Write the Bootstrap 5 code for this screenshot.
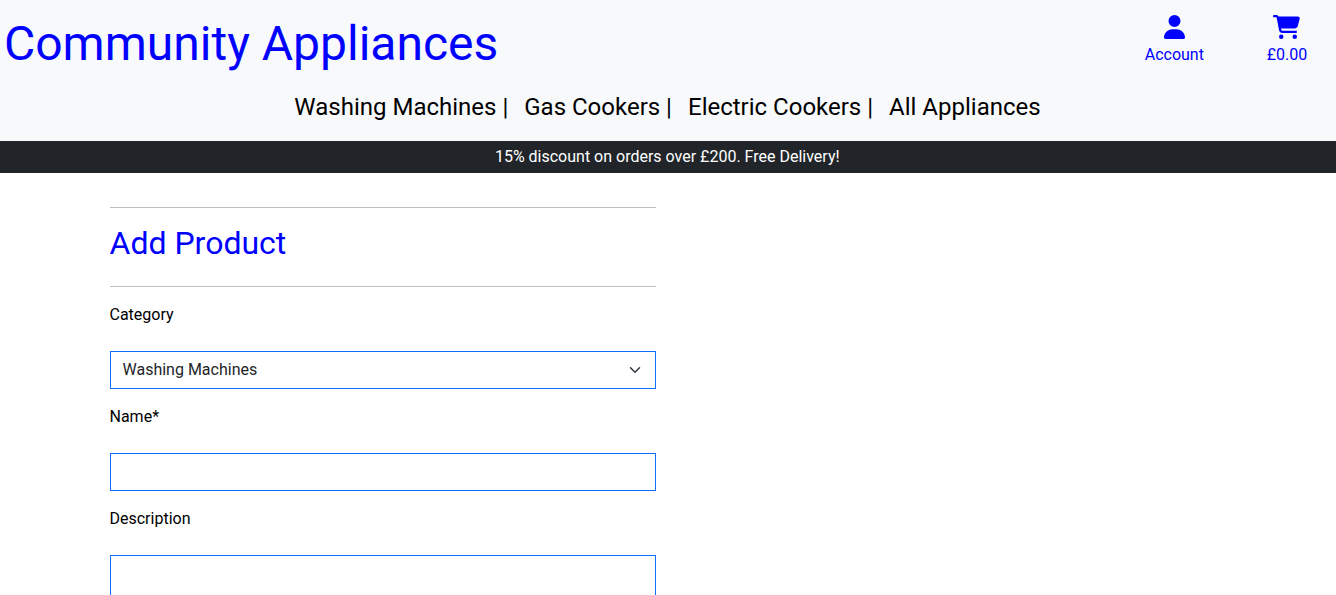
<!DOCTYPE html>
<html lang="en">
<head>
<meta charset="utf-8">
<meta name="viewport" content="width=device-width, initial-scale=1">
<title>Community Appliances</title>
<link href="https://cdn.jsdelivr.net/npm/bootstrap@5.3.0/dist/css/bootstrap.min.css" rel="stylesheet">
<style>
html, body { height: 100%; }
body { font-family: Roboto, sans-serif; color: #000; overflow: hidden; }
.site-header { height: 141px; }
.brand-blue, .brand-blue:hover { color: #00f; text-decoration: none; }
.site-title { font-size: 48px; line-height: 72px; padding: 8px 0 0 4px; }
.header-links { padding: 15px 28.8px 0 0; gap: 62.8px; }
.header-links svg { display: block; margin: 0 auto 4px; height: 24px; }
.main-nav { font-size: 24px; line-height: 36px; padding: 9px 0 0; margin-left: -1px; gap: 16px; }
.main-nav a { color: #000; text-decoration: none; }
.promo-bar { height: 32px; line-height: 32px; padding-right: 1.5px; }
.product-form { width: 546px; margin: 34px 0 0 109.5px; }
.product-form hr { margin: 0; }
.product-form h2 { font-size: 32px; line-height: 38.4px; font-weight: 400; margin: 16px 0 24px; }
.product-form .form-label { display: block; margin: 0 0 24px; }
.product-form .form-control, .product-form .form-select { border-color: #0d6efd; border-radius: 0; height: 38px; margin-bottom: 16px; }
.product-form textarea.form-control { height: 240px; resize: none; }
</style>
</head>
<body>
<header class="site-header bg-light">
  <div class="d-flex justify-content-between align-items-start">
    <a href="#" class="site-title brand-blue">Community Appliances</a>
    <div class="header-links d-flex text-center">
      <a href="#" class="brand-blue">
        <svg width="21" height="24" viewBox="0 0 448 512" fill="currentColor" aria-hidden="true"><path d="M224 256A128 128 0 1 0 224 0a128 128 0 1 0 0 256zm-45.700 48C79.800 304 0 383.800 0 482.300C0 498.700 13.300 512 29.700 512H418.300c16.400 0 29.700-13.300 29.700-29.700C448 383.800 368.200 304 269.700 304H178.300z"/></svg>
        Account</a>
      <a href="#" class="brand-blue">
        <svg width="27" height="24" viewBox="0 0 576 512" fill="currentColor" aria-hidden="true"><path d="M0 24C0 10.700 10.700 0 24 0H69.500c22 0 41.500 12.800 50.600 32h411c26.300 0 45.500 25 38.600 50.400l-41 152.300c-8.500 31.400-37 53.300-69.500 53.300H170.700l5.400 28.500c2.200 11.300 12.100 19.500 23.600 19.500H488c13.300 0 24 10.700 24 24s-10.700 24-24 24H199.700c-34.600 0-64.300-24.600-70.700-58.500L77.400 54.500c-.7-3.800-4-6.500-7.900-6.500H24C10.700 48 0 37.300 0 24zM128 464a48 48 0 1 1 96 0 48 48 0 1 1-96 0zm336-48a48 48 0 1 1 0 96 48 48 0 1 1 0-96z"/></svg>
        £0.00</a>
    </div>
  </div>
  <nav class="main-nav d-flex justify-content-center">
    <a href="#">Washing Machines |</a>
    <a href="#">Gas Cookers |</a>
    <a href="#">Electric Cookers |</a>
    <a href="#">All Appliances</a>
  </nav>
</header>
<div class="promo-bar bg-dark text-white text-center">15% discount on orders over £200. Free Delivery!</div>
<main>
  <form class="product-form">
    <hr>
    <h2 class="brand-blue">Add Product</h2>
    <hr class="mb-3">
    <label class="form-label" for="category">Category</label>
    <select class="form-select" id="category"><option>Washing Machines</option><option>Gas Cookers</option><option>Electric Cookers</option></select>
    <label class="form-label" for="name">Name*</label>
    <input class="form-control" id="name" type="text">
    <label class="form-label" for="description">Description</label>
    <textarea class="form-control" id="description"></textarea>
  </form>
</main>
<script src="https://cdn.jsdelivr.net/npm/bootstrap@5.3.0/dist/js/bootstrap.bundle.min.js"></script>
</body>
</html>
